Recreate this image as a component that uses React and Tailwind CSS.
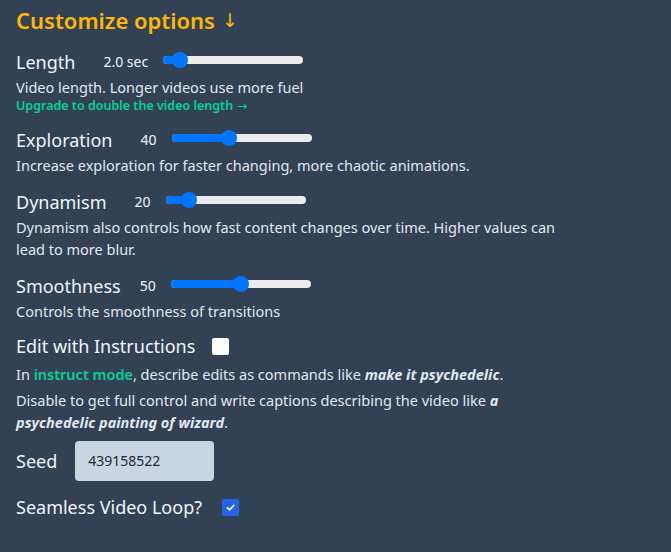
import React from "react";

function Slider({ value, min = 0, max = 100, width = 140 }) {
    const pct = (value - min) / (max - min);
    const center = 8 + pct * (width - 16);
    return (
        <div className="relative h-2 w-[140px] shrink-0 rounded-full bg-[#ececec]">
            <div
                className="absolute left-0 top-0 h-2 rounded-l-full bg-[#0075ff]"
                style={{ width: center }}
            />
            <div
                className="absolute top-[-4px] h-4 w-4 rounded-full bg-[#0075ff]"
                style={{ left: center - 8 }}
            />
        </div>
    );
}

function SliderRow({ label, value, display, min, max, valueGap = "ml-7" }) {
    return (
        <div className="flex items-center">
            <span className="text-lg leading-7 text-slate-100">{label}</span>
            <span className={`${valueGap} text-sm text-slate-100`}>{display}</span>
            <div className="-mt-1 ml-[15px]">
                <Slider value={value} min={min} max={max} />
            </div>
        </div>
    );
}

export default function App() {
    return (
        <div className="min-h-screen bg-[#334155] px-4 pt-[6px] font-['Noto_Sans','Open_Sans',sans-serif] text-slate-200">
            <div className="w-[562px]">
                <h2 className="flex h-7 items-center text-[22px] font-semibold leading-7 text-amber-400">
                    Customize options
                    <span className="ml-[7px] font-['DejaVu_Sans',sans-serif] text-[19px] font-normal leading-none">
                        ↓
                    </span>
                </h2>

                <div className="mt-[14px]">
                    <SliderRow label="Length" value={9} max={124} display="2.0 sec" />
                    <p className="text-[14.5px] leading-[22px]">
                        Video length. Longer videos use more fuel
                    </p>
                    <a
                        href="#"
                        className="flex h-4 items-center text-[12.5px] font-semibold leading-4 text-emerald-400"
                    >
                        Upgrade to double the video length
                        <span className="ml-1 font-['DejaVu_Sans',sans-serif] text-[12px] font-normal leading-none">
                            →
                        </span>
                    </a>
                </div>

                <div className="mt-3">
                    <SliderRow label="Exploration" value={40} display="40" />
                    <p className="text-[14.5px] leading-[22px]">
                        Increase exploration for faster changing, more chaotic animations.
                    </p>
                </div>

                <div className="mt-3">
                    <SliderRow label="Dynamism" value={15} max={124} display="20" />
                    <p className="text-[14.5px] leading-[22px]">
                        Dynamism also controls how fast content changes over time. Higher
                        values can lead to more blur.
                    </p>
                </div>

                <div className="mt-3">
                    <SliderRow
                        label="Smoothness"
                        value={50}
                        display="50"
                        valueGap="ml-[19px]"
                    />
                    <p className="text-[14.5px] leading-[22px]">
                        Controls the smoothness of transitions
                    </p>
                </div>

                <div className="mt-[10px]">
                    <div className="flex items-center">
                        <span className="text-lg leading-7 text-slate-100">
                            Edit with Instructions
                        </span>
                        <span className="ml-[17px] h-[17px] w-[17px] rounded-[2px] bg-white" />
                    </div>
                    <p className="mt-[3px] text-[14.5px] leading-[22px]">
                        In{" "}
                        <span className="font-semibold text-emerald-400">instruct mode</span>,
                        describe edits as commands like{" "}
                        <b>
                            <i>make it psychedelic</i>
                        </b>
                        .
                    </p>
                    <p className="mt-1 text-[14.5px] leading-[22px]">
                        Disable to get full control and write captions describing the video
                        like{" "}
                        <b>
                            <i>a psychedelic painting of wizard</i>
                        </b>
                        .
                    </p>
                </div>

                <div className="mt-2 flex items-center">
                    <span className="text-lg leading-7 text-slate-100">Seed</span>
                    <div className="ml-[18px] flex h-10 w-[139px] items-center rounded bg-slate-300 px-[13px] text-sm text-gray-800">
                        439158522
                    </div>
                </div>

                <div className="mt-3 flex items-center">
                    <span className="text-lg leading-7 text-slate-100">
                        Seamless Video Loop?
                    </span>
                    <span className="ml-5 flex h-[17px] w-[17px] items-center justify-center rounded-[2px] bg-[#2563eb]">
                        <svg viewBox="0 0 12 12" className="h-[11px] w-[11px]">
                            <path
                                d="M2.5 6.3 L5 8.6 L9.6 3.6"
                                fill="none"
                                stroke="white"
                                strokeWidth="1.8"
                                strokeLinecap="round"
                                strokeLinejoin="round"
                            />
                        </svg>
                    </span>
                </div>
            </div>
        </div>
    );
}
